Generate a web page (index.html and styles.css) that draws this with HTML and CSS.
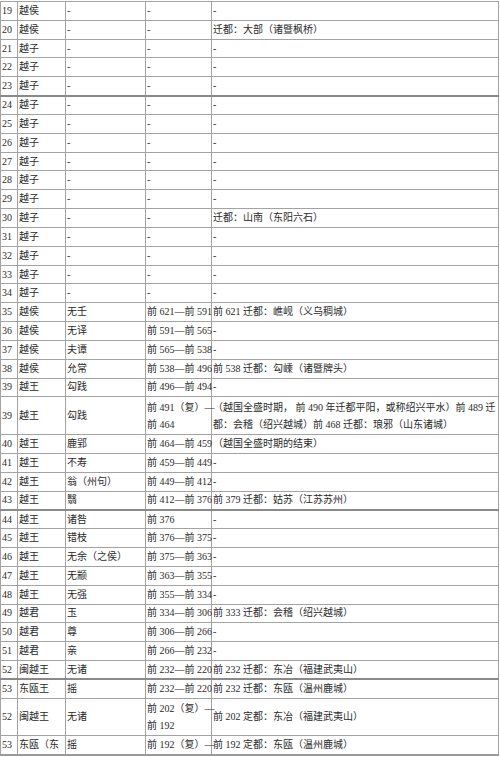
FILE: index.html
```html
<!DOCTYPE html>
<html lang="zh-CN">
<head>
<meta charset="utf-8">
<title>越国世系表</title>
<link rel="stylesheet" href="styles.css">
</head>
<body>
<table class="kings">
<colgroup>
<col class="c-no"><col class="c-title"><col class="c-name"><col class="c-years"><col class="c-note">
</colgroup>
<tbody>
<tr><td>19</td><td>越侯</td><td>-</td><td>-</td><td>-</td></tr>
<tr><td>20</td><td>越侯</td><td>-</td><td>-</td><td>迁都：大部（诸暨枫桥）</td></tr>
<tr><td>21</td><td>越子</td><td>-</td><td>-</td><td>-</td></tr>
<tr><td>22</td><td>越子</td><td>-</td><td>-</td><td>-</td></tr>
<tr class="brk"><td>23</td><td>越子</td><td>-</td><td>-</td><td>-</td></tr>
<tr><td>24</td><td>越子</td><td>-</td><td>-</td><td>-</td></tr>
<tr><td>25</td><td>越子</td><td>-</td><td>-</td><td>-</td></tr>
<tr><td>26</td><td>越子</td><td>-</td><td>-</td><td>-</td></tr>
<tr><td>27</td><td>越子</td><td>-</td><td>-</td><td>-</td></tr>
<tr><td>28</td><td>越子</td><td>-</td><td>-</td><td>-</td></tr>
<tr><td>29</td><td>越子</td><td>-</td><td>-</td><td>-</td></tr>
<tr><td>30</td><td>越子</td><td>-</td><td>-</td><td>迁都：山南（东阳六石）</td></tr>
<tr><td>31</td><td>越子</td><td>-</td><td>-</td><td>-</td></tr>
<tr><td>32</td><td>越子</td><td>-</td><td>-</td><td>-</td></tr>
<tr><td>33</td><td>越子</td><td>-</td><td>-</td><td>-</td></tr>
<tr><td>34</td><td>越子</td><td>-</td><td>-</td><td>-</td></tr>
<tr><td>35</td><td>越侯</td><td>无壬</td><td>前 621—前 591</td><td>前 621 迁都：嶕岘（义乌稠城）</td></tr>
<tr><td>36</td><td>越侯</td><td>无译</td><td>前 591—前 565</td><td>-</td></tr>
<tr><td>37</td><td>越侯</td><td>夫谭</td><td>前 565—前 538</td><td>-</td></tr>
<tr><td>38</td><td>越侯</td><td>允常</td><td>前 538—前 496</td><td>前 538 迁都：勾嵊（诸暨牌头）</td></tr>
<tr><td>39</td><td>越王</td><td>勾践</td><td>前 496—前 494</td><td>-</td></tr>
<tr class="dbl"><td>39</td><td>越王</td><td>勾践</td><td>前 491（复）—<br>前 464</td><td>（越国全盛时期， 前 490 年迁都平阳，或称绍兴平水）前 489 迁<br>都：会稽（绍兴越城）前 468 迁都：琅邪（山东诸城）</td></tr>
<tr><td>40</td><td>越王</td><td>鹿郢</td><td>前 464—前 459</td><td>（越国全盛时期的结束）</td></tr>
<tr><td>41</td><td>越王</td><td>不寿</td><td>前 459—前 449</td><td>-</td></tr>
<tr><td>42</td><td>越王</td><td>翁（州句）</td><td>前 449—前 412</td><td>-</td></tr>
<tr class="brk"><td>43</td><td>越王</td><td>翳</td><td>前 412—前 376</td><td>前 379 迁都：姑苏（江苏苏州）</td></tr>
<tr><td>44</td><td>越王</td><td>诸咎</td><td>前 376</td><td>-</td></tr>
<tr><td>45</td><td>越王</td><td>错枝</td><td>前 376—前 375</td><td>-</td></tr>
<tr><td>46</td><td>越王</td><td>无余（之侯）</td><td>前 375—前 363</td><td>-</td></tr>
<tr><td>47</td><td>越王</td><td>无颛</td><td>前 363—前 355</td><td>-</td></tr>
<tr><td>48</td><td>越王</td><td>无强</td><td>前 355—前 334</td><td>-</td></tr>
<tr><td>49</td><td>越君</td><td>玉</td><td>前 334—前 306</td><td>前 333 迁都：会稽（绍兴越城）</td></tr>
<tr><td>50</td><td>越君</td><td>尊</td><td>前 306—前 266</td><td>-</td></tr>
<tr><td>51</td><td>越君</td><td>亲</td><td>前 266—前 232</td><td>-</td></tr>
<tr class="brk"><td>52</td><td>闽越王</td><td>无诸</td><td>前 232—前 220</td><td>前 232 迁都：东冶（福建武夷山）</td></tr>
<tr><td>53</td><td>东瓯王</td><td>摇</td><td>前 232—前 220</td><td>前 232 迁都：东瓯（温州鹿城）</td></tr>
<tr class="dbl"><td>52</td><td>闽越王</td><td>无诸</td><td>前 202（复）—<br>前 192</td><td>前 202 定都：东冶（福建武夷山）</td></tr>
<tr class="last"><td>53</td><td>东瓯（东</td><td>摇</td><td>前 192（复）—</td><td>前 192 定都：东瓯（温州鹿城）</td></tr>
</tbody>
</table>
</body>
</html>
```

FILE: styles.css
```css
html, body {
  margin: 0;
  padding: 0;
  background: #ffffff;
}

body {
  padding-top: 1px;
}

.kings {
  table-layout: fixed;
  border-collapse: collapse;
  width: 498px;
  font-family: "Liberation Serif", "Noto Sans CJK SC", serif;
  font-size: 10px;
  color: #2a2a2a;
}

.c-no { width: 17px; }
.c-title { width: 48px; }
.c-name { width: 80px; }
.c-years { width: 66px; }
.c-note { width: 287px; }

.kings tr {
  height: 18.83px;
}

.kings tr.dbl {
  height: 37.66px;
}

.kings td {
  border: 1px solid #a3a3a3;
  padding: 0 0 0 1px;
  white-space: nowrap;
  overflow: visible;
  vertical-align: middle;
  line-height: 14px;
}

.kings tr.dbl td {
  line-height: 17px;
}

.kings tr.brk td {
  border-bottom: 2px solid #8a8a8a;
}

.kings tr.last td {
  border-bottom: 2px solid #9a9a9a;
}
```
